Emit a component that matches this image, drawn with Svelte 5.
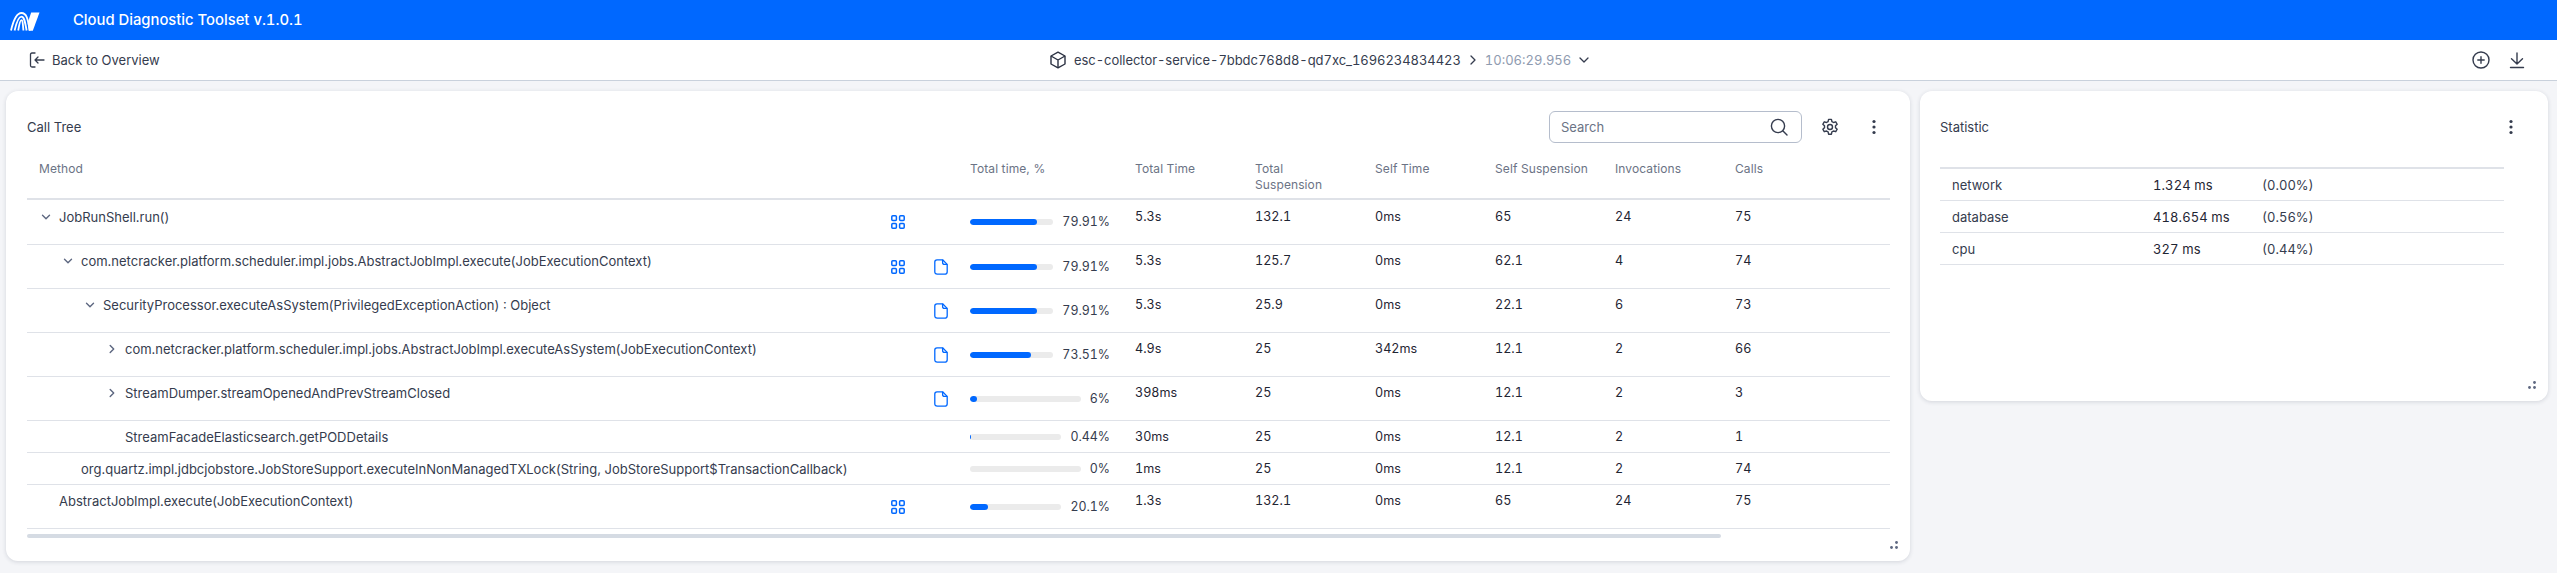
<script>
  const rows = [
    { name: 'JobRunShell.run()', level: 0, chevron: 'down', grid: true, file: false, pct: 79.91, label: '79.91%', total: '5.3s', susp: '132.1', self: '0ms', selfSusp: '65', inv: '24', calls: '75' },
    { name: 'com.netcracker.platform.scheduler.impl.jobs.AbstractJobImpl.execute(JobExecutionContext)', level: 1, chevron: 'down', grid: true, file: true, pct: 79.91, label: '79.91%', total: '5.3s', susp: '125.7', self: '0ms', selfSusp: '62.1', inv: '4', calls: '74' },
    { name: 'SecurityProcessor.executeAsSystem(PrivilegedExceptionAction) : Object', level: 2, chevron: 'down', grid: false, file: true, pct: 79.91, label: '79.91%', total: '5.3s', susp: '25.9', self: '0ms', selfSusp: '22.1', inv: '6', calls: '73' },
    { name: 'com.netcracker.platform.scheduler.impl.jobs.AbstractJobImpl.executeAsSystem(JobExecutionContext)', level: 3, chevron: 'right', grid: false, file: true, pct: 73.51, label: '73.51%', total: '4.9s', susp: '25', self: '342ms', selfSusp: '12.1', inv: '2', calls: '66' },
    { name: 'StreamDumper.streamOpenedAndPrevStreamClosed', level: 3, chevron: 'right', grid: false, file: true, pct: 6, label: '6%', total: '398ms', susp: '25', self: '0ms', selfSusp: '12.1', inv: '2', calls: '3' },
    { name: 'StreamFacadeElasticsearch.getPODDetails', level: 3, chevron: '', grid: false, file: false, pct: 0.44, label: '0.44%', total: '30ms', susp: '25', self: '0ms', selfSusp: '12.1', inv: '2', calls: '1', short: true },
    { name: 'org.quartz.impl.jdbcjobstore.JobStoreSupport.executeInNonManagedTXLock(String, JobStoreSupport$TransactionCallback)', level: 1, chevron: '', grid: false, file: false, pct: 0, label: '0%', total: '1ms', susp: '25', self: '0ms', selfSusp: '12.1', inv: '2', calls: '74', short: true },
    { name: 'AbstractJobImpl.execute(JobExecutionContext)', level: 0, chevron: '', grid: true, file: false, pct: 20.1, label: '20.1%', total: '1.3s', susp: '132.1', self: '0ms', selfSusp: '65', inv: '24', calls: '75' }
  ];
  const stats = [
    { name: 'network', value: '1.324 ms', pct: '(0.00%)' },
    { name: 'database', value: '418.654 ms', pct: '(0.56%)' },
    { name: 'cpu', value: '327 ms', pct: '(0.44%)' }
  ];
</script>

{#snippet dots()}
  <svg class="icon" viewBox="0 0 20 20" fill="#353c4e"><circle cx="10" cy="4.5" r="1.6" /><circle cx="10" cy="10" r="1.6" /><circle cx="10" cy="15.5" r="1.6" /></svg>
{/snippet}

{#snippet handle()}
  <svg class="handle" viewBox="0 0 8 8" fill="#5d6780"><circle cx="6.5" cy="1.5" r="1.4" /><circle cx="6.5" cy="6.5" r="1.4" /><circle cx="1.5" cy="6.5" r="1.4" /></svg>
{/snippet}

<div class="page">
  <header class="topbar">
    <svg class="logo" viewBox="0 0 30 19" fill="none" stroke="#fff" stroke-width="1.8">
      <path d="M1 18.5 C3.8 6.5 6.8 1 11.5 1 C16.5 1 17.6 6 20 18.5" />
      <path d="M4.6 18.5 C6.8 9 8.8 4.6 11.4 4.6 C14.2 4.6 15 9 16.6 18.5" />
      <path d="M8.2 18.5 C9.3 12 10.2 8.2 11.4 8.2 C12.6 8.2 12.9 12 13.4 18.5" />
      <path d="M21.2 0.5 H29.5 L22.8 18.7 H18.6 L17.6 11 Z" fill="#fff" stroke="none" />
    </svg>
    <span class="app-title">Cloud Diagnostic Toolset v.1.0.1</span>
  </header>

  <nav class="toolbar">
    <a class="back">
      <svg class="icon-back" viewBox="0 0 16 16" fill="none" stroke="#353c4e" stroke-width="1.3" stroke-linecap="round" stroke-linejoin="round">
        <path d="M6 1 H3 Q1.5 1 1.5 2.5 V13.5 Q1.5 15 3 15 H6" />
        <path d="M15 8 H6 M9 5 L6 8 L9 11" />
      </svg>
      Back to Overview
    </a>
    <div class="crumbs">
      <svg class="icon-cube" viewBox="0 0 18 18" fill="none" stroke="#2b3142" stroke-width="1.4" stroke-linejoin="round">
        <path d="M9 1.2 L16 5 V13 L9 16.8 L2 13 V5 Z" />
        <path d="M2 5 L9 9 L16 5 M9 9 V16.8" />
      </svg>
      <span class="pod">esc-collector-service-7bbdc768d8-qd7xc_1696234834423</span>
      <svg class="chev-small" viewBox="0 0 6 10" fill="none" stroke="#353c4e" stroke-width="1.3" stroke-linecap="round" stroke-linejoin="round"><path d="M1 1 L5 5 L1 9" /></svg>
      <span class="time">10:06:29.956</span>
      <svg class="chev-down" viewBox="0 0 10 6" fill="none" stroke="#353c4e" stroke-width="1.3" stroke-linecap="round" stroke-linejoin="round"><path d="M1 1 L5 5 L9 1" /></svg>
    </div>
    <div class="actions">
      <svg class="icon" viewBox="0 0 20 20" fill="none" stroke="#353c4e" stroke-width="1.4" stroke-linecap="round">
        <circle cx="10" cy="10" r="8" /><path d="M10 6.8 V13.2 M6.8 10 H13.2" />
      </svg>
      <svg class="icon" viewBox="0 0 20 20" fill="none" stroke="#353c4e" stroke-width="1.4" stroke-linecap="round" stroke-linejoin="round">
        <path d="M10 3 V14 M4.5 8.8 L10 14 L15.5 8.8 M3.5 17.5 H16.5" />
      </svg>
    </div>
  </nav>

  <main class="content">
    <section class="card tree-card">
      <div class="card-head">
        <h2>Call Tree</h2>
        <label class="search">
          <input placeholder="Search" />
          <svg class="icon" viewBox="0 0 20 20" fill="none" stroke="#353c4e" stroke-width="1.4" stroke-linecap="round">
            <circle cx="9" cy="9" r="6.6" /><path d="M14 14 L18 18" />
          </svg>
        </label>
        <svg class="icon gear" viewBox="0 0 24 24" fill="none" stroke="#353c4e" stroke-width="1.7" stroke-linejoin="round">
          <circle cx="12" cy="12" r="3" />
          <path d="M10.3 2.8 h3.4 l.6 2.7 1.9 1.1 2.7-.8 1.7 2.9-2 1.9 v2.2 l2 1.9-1.7 2.9-2.7-.8-1.9 1.1-.6 2.7 h-3.4 l-.6-2.7-1.9-1.1-2.7.8-1.7-2.9 2-1.9 v-2.2 l-2-1.9 1.7-2.9 2.7.8 1.9-1.1 z" />
        </svg>
        <button class="dots">{@render dots()}</button>
      </div>

      <div class="thead">
        <div class="c-method head-method">Method</div>
        <div class="c-pct">Total time, %</div>
        <div class="c-num">Total Time</div>
        <div class="c-num">Total Suspension</div>
        <div class="c-num">Self Time</div>
        <div class="c-num">Self Suspension</div>
        <div class="c-num">Invocations</div>
        <div class="c-last">Calls</div>
      </div>

      {#each rows as r}
        <div class="row" class:short={r.short}>
          <div class="c-method method">
            <div class="name" style="padding-left: {32 + r.level * 22}px">
              {#if r.chevron === 'down'}
                <svg class="tw" viewBox="0 0 10 10" fill="none" stroke="#5d6780" stroke-width="1.4" stroke-linecap="round" stroke-linejoin="round"><path d="M1.5 3.2 L5 6.7 L8.5 3.2" /></svg>
              {:else if r.chevron === 'right'}
                <svg class="tw" viewBox="0 0 10 10" fill="none" stroke="#5d6780" stroke-width="1.4" stroke-linecap="round" stroke-linejoin="round"><path d="M3.2 1.5 L6.7 5 L3.2 8.5" /></svg>
              {/if}
              <span>{r.name}</span>
            </div>
            <div class="slot slot-grid">
              {#if r.grid}
                <svg viewBox="0 0 14 14" fill="none" stroke="#0068ff" stroke-width="1.5"><rect x="0.8" y="0.8" width="4.6" height="4.6" rx="1" /><rect x="8.6" y="0.8" width="4.6" height="4.6" rx="1" /><rect x="0.8" y="8.6" width="4.6" height="4.6" rx="1" /><rect x="8.6" y="8.6" width="4.6" height="4.6" rx="1" /></svg>
              {/if}
            </div>
            <div class="slot slot-file">
              {#if r.file}
                <svg viewBox="0 0 14 16" fill="none" stroke="#0068ff" stroke-width="1.3" stroke-linejoin="round"><path d="M3 0.8 H8.6 L13.2 5.4 V12.7 Q13.2 15.2 10.7 15.2 H3.3 Q0.8 15.2 0.8 12.7 V3 Q0.8 0.8 3 0.8 Z" /><path d="M8.6 0.8 V3.4 Q8.6 5.4 10.6 5.4 H13.2" /></svg>
              {/if}
            </div>
          </div>
          <div class="c-pct pct">
            <div class="track"><div class="fill" style="width: {r.pct}%"></div></div>
            <span class="pct-label">{r.label}</span>
          </div>
          <div class="c-num val">{r.total}</div>
          <div class="c-num val">{r.susp}</div>
          <div class="c-num val">{r.self}</div>
          <div class="c-num val">{r.selfSusp}</div>
          <div class="c-num val">{r.inv}</div>
          <div class="c-last val">{r.calls}</div>
        </div>
      {/each}
      <div class="hscroll"></div>
      {@render handle()}
    </section>

    <section class="card stat-card">
      <div class="card-head">
        <h2>Statistic</h2>
        <button class="dots">{@render dots()}</button>
      </div>
      <div class="stat-table">
        {#each stats as s}
          <div class="stat-row">
            <span class="s-name">{s.name}</span>
            <span class="s-val">{s.value}</span>
            <span class="s-pct">{s.pct}</span>
          </div>
        {/each}
      </div>
      {@render handle()}
    </section>
  </main>
</div>

<style>
  :global(html) {
    overflow: hidden;
  }
  :global(body) {
    margin: 0;
    background: #f4f5f8;
    font-family: Inter, "Noto Sans", sans-serif;
    font-size: 13px;
    line-height: 16px;
    color: #353c4e;
  }
  .page {
    height: 573px;
    overflow: hidden;
    display: flex;
    flex-direction: column;
  }
  .topbar {
    height: 40px;
    background: #0068ff;
    display: flex;
    align-items: center;
    padding-left: 10px;
  }
  .logo { width: 30px; height: 19px; margin-top: 2px; }
  .app-title {
    margin-left: 33px;
    color: #fff;
    font-size: 14.8px;
    font-weight: 500;
    font-variant-numeric: tabular-nums;
  }
  .toolbar {
    height: 41px;
    box-sizing: border-box;
    background: #fff;
    border-bottom: 1px solid #c9d1dc;
    display: grid;
    grid-template-columns: 1049px auto 1fr;
    align-items: center;
  }
  .back {
    padding-left: 29px;
    display: flex;
    align-items: center;
    gap: 7px;
  }
  .icon-back { width: 16px; height: 16px; }
  .crumbs { display: flex; align-items: center; font-variant-numeric: tabular-nums; }
  .icon-cube { width: 18px; height: 18px; }
  .pod { margin-left: 7px; letter-spacing: -0.05px; }
  .chev-small { width: 6px; height: 10px; margin-left: 9px; }
  .time { margin-left: 9px; color: #8f9bb0; }
  .chev-down { width: 10px; height: 6px; margin-left: 8px; }
  .actions {
    display: flex;
    justify-content: flex-end;
    gap: 16px;
    padding-right: 30px;
  }
  .icon { width: 20px; height: 20px; flex: none; display: block; }
  .content {
    display: flex;
    align-items: flex-start;
    gap: 10px;
    padding: 10px 9px 0 6px;
  }
  .card {
    position: relative;
    box-sizing: border-box;
    background: #fff;
    border-radius: 12px;
    box-shadow: 0 1px 4px rgba(40, 50, 75, 0.16);
    padding-top: 20px;
  }
  .tree-card {
    width: 1904px;
    flex: none;
    height: 470px;
    padding-left: 21px;
    padding-right: 20px;
  }
  .stat-card {
    flex: 1;
    height: 310px;
    padding-left: 20px;
    padding-right: 27px;
  }
  .card-head {
    display: flex;
    align-items: center;
    height: 32px;
  }
  h2 {
    margin: 0;
    font-size: 13px;
    font-weight: 400;
    flex: 1;
  }
  .search {
    width: 253px;
    height: 32px;
    box-sizing: border-box;
    border: 1px solid #b5bdcc;
    border-radius: 6px;
    display: flex;
    align-items: center;
    padding: 0 12px 0 11px;
  }
  input {
    flex: 1;
    min-width: 0;
    border: 0;
    outline: 0;
    padding: 0;
    font: inherit;
    color: inherit;
  }
  input::placeholder { color: #6b7385; opacity: 1; }
  .gear { margin-left: 18px; }
  .dots {
    border: 0;
    background: none;
    padding: 0;
    margin-left: 24px;
    margin-right: 6px;
  }
  .stat-card .dots { margin-right: 0; }
  .thead {
    display: flex;
    padding-top: 18px;
    height: 57px;
    box-sizing: border-box;
    border-bottom: 2px solid #dfe2e8;
    color: #6b7385;
    font-size: 12px;
    letter-spacing: 0.1px;
  }
  .head-method { padding-left: 12px; box-sizing: border-box; }
  .c-method { width: 943px; flex: none; }
  .c-pct { width: 165px; flex: none; }
  .c-num { width: 120px; flex: none; padding-right: 26px; box-sizing: border-box; }
  .c-last { flex: 1; }
  .row {
    display: flex;
    height: 44px;
    box-sizing: border-box;
    border-bottom: 1px solid #dfe2e8;
  }
  .thead + .row { height: 45px; }
  .thead + .row .val,
  .thead + .row .name { padding-top: 9px; }
  .row.short { height: 32px; }
  .val {
    padding-top: 8px;
    color: #1f2533;
    font-size: 12.6px;
    font-variant-numeric: tabular-nums;
  }
  .method { display: flex; }
  .name {
    position: relative;
    flex: none;
    width: 864px;
    box-sizing: border-box;
    padding-top: 8px;
    white-space: nowrap;
  }
  .tw {
    position: absolute;
    width: 10px;
    height: 10px;
    margin-left: -18px;
    margin-top: 3px;
  }
  .slot { display: flex; align-items: center; flex: none; }
  .slot-grid { width: 43px; }
  .slot-grid svg { width: 14px; height: 14px; }
  .slot-file { width: 36px; }
  .slot-file svg { width: 14px; height: 16px; }
  .pct {
    display: flex;
    align-items: center;
    padding-right: 25px;
    box-sizing: border-box;
  }
  .track {
    flex: 1;
    height: 6px;
    border-radius: 3px;
    background: #ebebeb;
    overflow: hidden;
  }
  .fill { height: 100%; border-radius: 3px; background: #0068ff; }
  .pct-label {
    margin-left: 9px;
    color: #353c4e;
    font-size: 12.4px;
    font-variant-numeric: tabular-nums;
  }
  .hscroll {
    width: 1694px;
    height: 4px;
    margin-top: 5px;
    border-radius: 2px;
    background: #d5dbe3;
  }
  .handle {
    position: absolute;
    right: 12px;
    bottom: 12px;
    width: 8px;
    height: 8px;
  }
  .stat-table {
    width: 564px;
    margin-top: 24px;
    border-top: 2px solid #dfe2e8;
  }
  .stat-row {
    display: flex;
    align-items: center;
    height: 32px;
    box-sizing: border-box;
    border-bottom: 1px solid #dfe2e8;
    padding-left: 12px;
  }
  .s-name { width: 201px; }
  .s-val { width: 109px; color: #1f2533; font-variant-numeric: tabular-nums; letter-spacing: 0.1px; }
  .s-pct { font-variant-numeric: tabular-nums; }
</style>
